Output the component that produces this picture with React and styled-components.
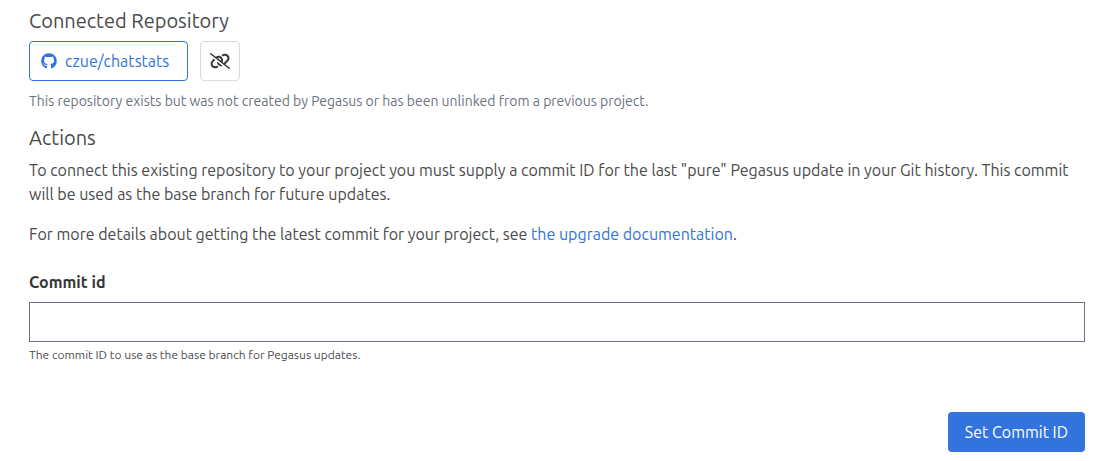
import React from "react";
import styled, { createGlobalStyle } from "styled-components";
import { FaGithub, FaLinkSlash } from "react-icons/fa6";

const GlobalStyle = createGlobalStyle`
  *, *::before, *::after { box-sizing: border-box; }
  body {
    margin: 0;
    background: #fff;
    color: #4a4a4a;
    font-family: Ubuntu, "Noto Sans", "Open Sans", sans-serif;
    font-size: 16px;
    line-height: 24px;
  }
`;

const Page = styled.main`
  padding: 8px 18px 8px 29px;
`;

const Heading = styled.h2`
  margin: 0 0 8px;
  font-size: 20px;
  line-height: 25px;
  font-weight: 400;
`;

const ButtonRow = styled.div`
  display: flex;
  gap: 12px;
`;

const RepoLink = styled.a`
  display: inline-flex;
  align-items: center;
  gap: 8px;
  height: 40px;
  padding: 0 18px 0 11px;
  border: 1px solid #3273dc;
  border-radius: 4px;
  color: #3273dc;
  text-decoration: none;
`;

const IconButton = styled.button`
  display: inline-flex;
  align-items: center;
  justify-content: center;
  width: 40px;
  height: 40px;
  padding: 0;
  border: 1px solid #dbdbdb;
  border-radius: 4px;
  background: #fff;
  color: #363636;
  cursor: pointer;
`;

const Note = styled.p`
  margin: 8px 0 12px;
  font-size: 14px;
  line-height: 24px;
  color: #6b7280;
`;

const Paragraph = styled.p`
  margin: 0 0 16px;
`;

const TextLink = styled.a`
  color: #3273dc;
  text-decoration: none;
`;

const Form = styled.form`
  display: flex;
  flex-direction: column;
  margin-top: 24px;
`;

const Label = styled.label`
  margin-bottom: 8px;
  color: #363636;
  font-weight: 700;
`;

const TextInput = styled.input`
  width: 100%;
  height: 40px;
  padding: 8px 12px;
  border: 1px solid #6b7280;
  border-radius: 0;
  background: #fff;
  color: #363636;
  font: inherit;
`;

const HelpText = styled.p`
  margin: 4px 0 48px;
  font-size: 12px;
  line-height: 18px;
`;

const SubmitButton = styled.button`
  align-self: flex-end;
  height: 40px;
  padding: 0 17px;
  border: 0;
  border-radius: 4px;
  background: #3273dc;
  color: #fff;
  font: inherit;
  cursor: pointer;
`;

export default function App() {
  return (
    <>
      <GlobalStyle />
      <Page>
        <Heading>Connected Repository</Heading>
        <ButtonRow>
          <RepoLink href="#repository">
            <FaGithub size={16} aria-hidden="true" />
            <span>czue/chatstats</span>
          </RepoLink>
          <IconButton type="button" aria-label="Unlink repository">
            <FaLinkSlash size={20} aria-hidden="true" />
          </IconButton>
        </ButtonRow>
        <Note>
          This repository exists but was not created by Pegasus or has been
          unlinked from a previous project.
        </Note>
        <Heading>Actions</Heading>
        <Paragraph>
          To connect this existing repository to your project you must supply a
          commit ID for the last "pure" Pegasus update in your Git history. This
          commit will be used as the base branch for future updates.
        </Paragraph>
        <Paragraph>
          For more details about getting the latest commit for your project, see{" "}
          <TextLink href="#upgrading">the upgrade documentation</TextLink>.
        </Paragraph>
        <Form onSubmit={(event) => event.preventDefault()}>
          <Label htmlFor="commit-id">Commit id</Label>
          <TextInput
            id="commit-id"
            name="commit_id"
            type="text"
            aria-describedby="commit-id-help"
          />
          <HelpText id="commit-id-help">
            The commit ID to use as the base branch for Pegasus updates.
          </HelpText>
          <SubmitButton type="submit">Set Commit ID</SubmitButton>
        </Form>
      </Page>
    </>
  );
}
